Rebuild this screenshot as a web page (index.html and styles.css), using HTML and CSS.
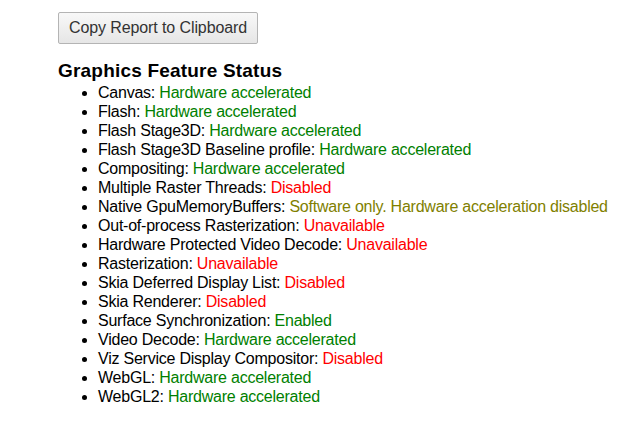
FILE: index.html
```html
<!DOCTYPE html>
<html lang="en">
<head>
    <meta charset="UTF-8">
    <title>GPU</title>
    <link rel="stylesheet" href="styles.css">
</head>
<body>
    <div class="container">
        <button class="copy-btn">Copy Report to Clipboard</button>

        <h3>Graphics Feature Status</h3>
        <ul class="feature-list">
            <li>Canvas: <span class="ok">Hardware accelerated</span></li>
            <li>Flash: <span class="ok">Hardware accelerated</span></li>
            <li>Flash Stage3D: <span class="ok">Hardware accelerated</span></li>
            <li>Flash Stage3D Baseline profile: <span class="ok">Hardware accelerated</span></li>
            <li>Compositing: <span class="ok">Hardware accelerated</span></li>
            <li>Multiple Raster Threads: <span class="off">Disabled</span></li>
            <li>Native GpuMemoryBuffers: <span class="warn">Software only. Hardware acceleration disabled</span></li>
            <li>Out-of-process Rasterization: <span class="off">Unavailable</span></li>
            <li>Hardware Protected Video Decode: <span class="off">Unavailable</span></li>
            <li>Rasterization: <span class="off">Unavailable</span></li>
            <li>Skia Deferred Display List: <span class="off">Disabled</span></li>
            <li>Skia Renderer: <span class="off">Disabled</span></li>
            <li>Surface Synchronization: <span class="ok">Enabled</span></li>
            <li>Video Decode: <span class="ok">Hardware accelerated</span></li>
            <li>Viz Service Display Compositor: <span class="off">Disabled</span></li>
            <li>WebGL: <span class="ok">Hardware accelerated</span></li>
            <li>WebGL2: <span class="ok">Hardware accelerated</span></li>
        </ul>
    </div>
</body>
</html>
```
FILE: styles.css
```css
body {
    font-family: "Liberation Sans", Arial, sans-serif;
    font-size: 16px;
    color: #000;
    background-color: #fff;
    margin: 0;
}
.container {
    padding: 12px 0 0 58px;
}
.copy-btn {
    font-family: "Liberation Sans", Arial, sans-serif;
    font-size: 16px;
    letter-spacing: -0.1px;
    color: #333;
    height: 32px;
    width: 200px;
    padding: 0;
    border: 1px solid #b4b4b4;
    border-radius: 2px;
    background: linear-gradient(#f8f8f8, #e6e6e6);
    cursor: pointer;
}
h3 {
    font-size: 19px;
    letter-spacing: 0.2px;
    font-weight: bold;
    margin: 16px 0 0 0;
    line-height: 22px;
}
.feature-list {
    margin: 1px 0 0 0;
    padding-left: 40px;
    line-height: 19px;
    letter-spacing: -0.23px;
}
.ok {
    color: #008000;
}
.off {
    color: #ff0000;
}
.warn {
    color: #808000;
}
```
